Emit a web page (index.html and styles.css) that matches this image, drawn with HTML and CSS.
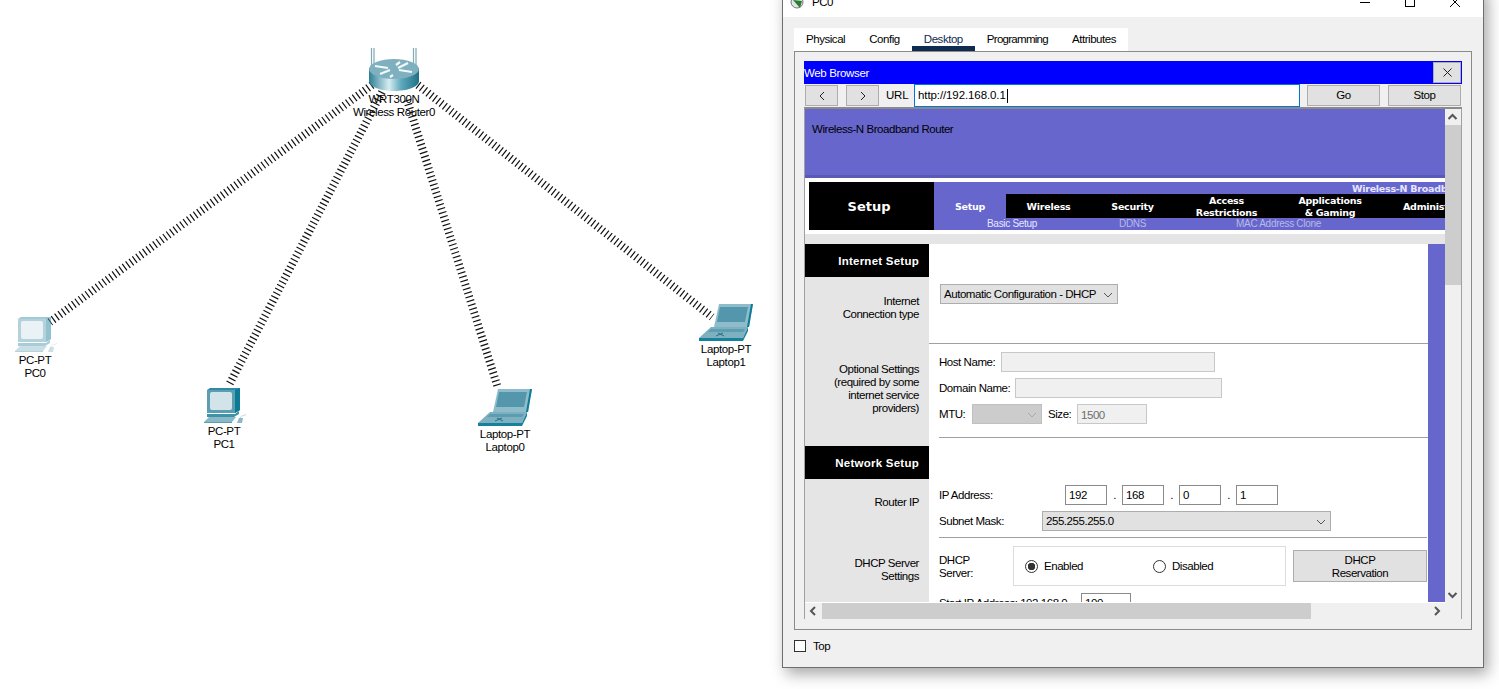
FILE: index.html
```html
<!DOCTYPE html>
<html lang="en">
<head>
<meta charset="utf-8">
<title>PC0</title>
<link rel="stylesheet" href="styles.css">
</head>
<body>
<svg class="links" width="780" height="480" viewBox="0 0 780 480" aria-hidden="true">
  <line x1="372" y1="85" x2="50" y2="322"/>
  <line x1="382" y1="92" x2="229" y2="385"/>
  <line x1="407" y1="100" x2="498" y2="388"/>
  <line x1="418" y1="85" x2="712" y2="317"/>
</svg>

<svg class="defs" width="0" height="0" aria-hidden="true">
  <symbol id="pc" viewBox="0 0 44 36">
    <polygon points="5,3 8,1 38,1 38,23 33,26 5,26" fill="#2f8ba3"/>
    <polygon points="33,3 38,1 38,23 33,26" fill="#0d7a96"/>
    <rect x="5" y="3" width="28" height="23" fill="#5b9db1"/>
    <rect x="8" y="5" width="22" height="18" rx="2" fill="#d3e3ea"/>
    <polygon points="5,27 33,27 37,24 37,27 32,30 5,30" fill="#3d93a9"/>
    <polygon points="2,35 7,30 34,30 30,35" fill="#8ab8c6"/>
    <rect x="2" y="35" width="28" height="1" fill="#5b9db1"/>
    <polygon points="35,36 37,31 41,31 40,36" fill="#8ab8c6"/>
    <path d="M38 31C40 27 43 30 44 27" fill="none" stroke="#b8d4dc" stroke-width="1"/>
  </symbol>
  <symbol id="laptop" viewBox="0 0 54 37">
    <polygon points="20,0 54,0 50,23 15,23" fill="#8fbccb"/>
    <polygon points="54,0 52,0 48,23 50,23" fill="#0d7a96"/>
    <polygon points="21,3 49,3 46,18 18,18" fill="#5497ad"/>
    <polygon points="0,34 12,23 49,23 44,34" fill="#7fb0c0"/>
    <polygon points="12,25 46,25 44,28 9,28" fill="#5b9db1"/>
    <polygon points="0,34 44,34 49,23 49,27 44,37 0,37" fill="#15819c"/>
    <path d="M17 32L24 29M19 29L25 32" stroke="#2a6f85" stroke-width="1"/>
  </symbol>
</svg>

<div class="node node-pc0">
  <svg class="pc-icon faded" width="44" height="36"><use href="#pc"/></svg>
  <span class="node-label">PC-PT<br>PC0</span>
</div>
<div class="node node-pc1">
  <svg class="pc-icon" width="44" height="36"><use href="#pc"/></svg>
  <span class="node-label">PC-PT<br>PC1</span>
</div>
<div class="node node-lap0">
  <svg class="lap-icon" width="54" height="37"><use href="#laptop"/></svg>
  <span class="node-label">Laptop-PT<br>Laptop0</span>
</div>
<div class="node node-lap1">
  <svg class="lap-icon" width="54" height="37"><use href="#laptop"/></svg>
  <span class="node-label">Laptop-PT<br>Laptop1</span>
</div>
<div class="node node-router">
  <svg class="router-icon" width="54" height="44" viewBox="0 0 54 44">
    <defs>
      <linearGradient id="cyl" x1="0" x2="1" y1="0" y2="0">
        <stop offset="0" stop-color="#2c7f95"/>
        <stop offset=".4" stop-color="#d5edf1"/>
        <stop offset=".65" stop-color="#5da7bb"/>
        <stop offset="1" stop-color="#1f7187"/>
      </linearGradient>
    </defs>
    <path d="M4.500 0V20M7 0V20M46.500 0V20M49 0V20" stroke="#7fa9b4" stroke-width="1.200"/>
    <path d="M2 20V33C2 39 14 43 27 43S52 39 52 33V20Z" fill="url(#cyl)"/>
    <ellipse cx="27" cy="21" rx="25" ry="10" fill="#7fb0bf"/>
    <path d="M8 18L21 20M32 22L45 24M13 26L23 22M31 20L41 15M26 27L23 29M29 17L33 14" stroke="#f2f9fa" stroke-width="2.200" fill="none"/>
  </svg>
  <span class="node-label router-label">WRT300N<br>Wireless Router0</span>
</div>

<section class="window">
  <header class="titlebar">
    <svg class="app-icon" width="17" height="17" viewBox="0 0 17 17">
      <circle cx="7" cy="8" r="6" fill="#dfe7e6" stroke="#777" stroke-width="1"/>
      <path d="M3 6L10 14L12 7" fill="#2a7d32"/>
    </svg>
    <span class="title">PC0</span>
    <span class="win-controls">
      <svg width="12" height="12" viewBox="0 0 12 12"><path d="M1 6.500H11" stroke="#000"/></svg>
      <svg width="12" height="12" viewBox="0 0 12 12"><rect x="1.500" y="1.500" width="9" height="9" fill="none" stroke="#000"/></svg>
      <svg width="12" height="12" viewBox="0 0 12 12"><path d="M1 1L11 11M11 1L1 11" stroke="#000"/></svg>
    </span>
  </header>

  <div class="win-body">
    <nav class="tabs">
      <span class="tab">Physical</span>
      <span class="tab">Config</span>
      <span class="tab tab-active">Desktop</span>
      <span class="tab tab-prog">Programming</span>
      <span class="tab">Attributes</span>
    </nav>

    <div class="panel">
      <div class="bb-title">
        <span>Web Browser</span>
        <button class="bb-close" type="button">
          <svg width="11" height="11" viewBox="0 0 11 11"><path d="M1.500 1.500L9.500 9.500M9.500 1.500L1.500 9.500" stroke="#222"/></svg>
        </button>
      </div>
      <div class="bb-toolbar">
        <button class="btn nav-btn" type="button">
          <svg width="8" height="10" viewBox="0 0 8 10"><path d="M6 1L2 5L6 9" fill="none" stroke="#222"/></svg>
        </button>
        <button class="btn nav-btn" type="button">
          <svg width="8" height="10" viewBox="0 0 8 10"><path d="M2 1L6 5L2 9" fill="none" stroke="#222"/></svg>
        </button>
        <span class="url-label">URL</span>
        <div class="url-input">http://192.168.0.1<i class="caret"></i></div>
        <button class="btn action-btn" type="button">Go</button>
        <button class="btn action-btn" type="button">Stop</button>
      </div>

      <div class="viewer">
        <div class="viewport">
          <div class="page">
            <div class="banner">Wireless-N Broadband Router</div>
            <div class="hero">
              <div class="hero-name">Setup</div>
              <div class="hero-nav">
                <div class="product">Wireless-N Broadband Router</div>
                <div class="menu">
                  <span class="menu-item menu-on">Setup</span>
                  <span class="menu-item menu-wireless">Wireless</span>
                  <span class="menu-item menu-security">Security</span>
                  <span class="menu-item menu-access">Access<br>Restrictions</span>
                  <span class="menu-item menu-apps">Applications<br>&amp; Gaming</span>
                  <span class="menu-item menu-admin">Administration</span>
                </div>
                <div class="submenu">
                  <span class="sub sub-basic">Basic Setup</span>
                  <span class="sub sub-ddns">DDNS</span>
                  <span class="sub sub-mac">MAC Address Clone</span>
                </div>
              </div>
            </div>
            <div class="divider-band"></div>

            <div class="main">
              <div class="sections">
                <div class="row row-head">
                  <div class="side side-head">Internet Setup</div>
                  <div class="content"></div>
                </div>
                <div class="row row-conn">
                  <div class="side"><p class="side-text st-conn">Internet<br>Connection type</p></div>
                  <div class="content">
                    <div class="select sel-conn">Automatic Configuration - DHCP<svg class="chev" width="10" height="6" viewBox="0 0 10 6"><path d="M1 1L5 5L9 1" fill="none" stroke="#555"/></svg></div>
                  </div>
                </div>
                <div class="row row-opt">
                  <div class="side"><p class="side-text st-opt">Optional Settings<br>(required by some<br>internet service<br>providers)</p></div>
                  <div class="content">
                    <div class="field f-host"><label class="lbl lbl-host">Host Name:</label><div class="box disabled b-host"></div></div>
                    <div class="field f-domain"><label class="lbl lbl-domain">Domain Name:</label><div class="box disabled b-domain"></div></div>
                    <div class="field f-mtu">
                      <label class="lbl lbl-mtu">MTU:</label>
                      <div class="select sel-mtu"><svg class="chev" width="10" height="6" viewBox="0 0 10 6"><path d="M1 1L5 5L9 1" fill="none" stroke="#a8a8a8"/></svg></div>
                      <label class="lbl lbl-size">Size:</label>
                      <div class="box disabled b-size">1500</div>
                    </div>
                    <hr class="rule rule-mtu">
                  </div>
                </div>
                <div class="row row-head">
                  <div class="side side-head">Network Setup</div>
                  <div class="content"></div>
                </div>
                <div class="row row-ip">
                  <div class="side"><p class="side-text st-ip">Router IP</p></div>
                  <div class="content">
                    <div class="field f-ip">
                      <label class="lbl lbl-ip">IP Address:</label>
                      <div class="box octet">192</div><span class="dot">.</span>
                      <div class="box octet">168</div><span class="dot">.</span>
                      <div class="box octet">0</div><span class="dot">.</span>
                      <div class="box octet">1</div>
                    </div>
                    <div class="field f-mask">
                      <label class="lbl lbl-mask">Subnet Mask:</label>
                      <div class="select sel-mask">255.255.255.0<svg class="chev" width="10" height="6" viewBox="0 0 10 6"><path d="M1 1L5 5L9 1" fill="none" stroke="#555"/></svg></div>
                    </div>
                    <hr class="rule rule-ip">
                  </div>
                </div>
                <div class="row row-dhcp">
                  <div class="side"><p class="side-text st-dhcp">DHCP Server<br>Settings</p></div>
                  <div class="content">
                    <div class="field f-dhcp">
                      <label class="lbl lbl-dhcp">DHCP<br>Server:</label>
                      <div class="radio-box">
                        <span class="radio-opt r-en"><i class="radio radio-on"></i>Enabled</span>
                        <span class="radio-opt"><i class="radio"></i>Disabled</span>
                      </div>
                      <button class="btn res-btn" type="button">DHCP<br>Reservation</button>
                    </div>
                    <div class="field f-start">
                      <label class="lbl lbl-start">Start IP Address: 192.168.0.</label>
                      <div class="box b-start">100</div>
                    </div>
                  </div>
                </div>
              </div>
              <div class="strip"></div>
            </div>
          </div>
        </div>
        <div class="vbar">
          <svg class="arrow" width="16" height="16" viewBox="0 0 16 16"><path d="M3.500 10L7.500 6L11.500 10" fill="none" stroke="#555" stroke-width="2"/></svg>
          <div class="vtrack"><div class="vthumb"></div></div>
          <svg class="arrow" width="16" height="16" viewBox="0 0 16 16"><path d="M3.500 6L7.500 10L11.500 6" fill="none" stroke="#555" stroke-width="2"/></svg>
        </div>
        <div class="hbar">
          <svg class="arrow" width="17" height="16" viewBox="0 0 17 16"><path d="M10 4L6 8L10 12" fill="none" stroke="#555" stroke-width="2"/></svg>
          <div class="htrack"><div class="hthumb"></div></div>
          <svg class="arrow" width="17" height="16" viewBox="0 0 17 16"><path d="M7 4L11 8L7 12" fill="none" stroke="#555" stroke-width="2"/></svg>
        </div>
        <div class="corner"></div>
      </div>
    </div>

    <div class="footer">
      <i class="check"></i><span>Top</span>
    </div>
  </div>
</section>
</body>
</html>
```

FILE: styles.css
```css
* { box-sizing: border-box; }
html, body { margin: 0; padding: 0; }
body {
  width: 1499px;
  height: 689px;
  position: relative;
  overflow: hidden;
  background: #fff;
  font-family: "Liberation Sans", Arial, sans-serif;
  font-size: 11.5px;
  line-height: 13px;
  letter-spacing: -0.45px;
  color: #000;
}
p { margin: 0; }
hr { margin: 0; border: 0; }
button { font: inherit; letter-spacing: inherit; color: inherit; padding: 0; }
i { display: block; font-style: normal; }

/* network canvas */
.links { position: absolute; left: 0; top: 0; }
.links line { stroke: #111; stroke-width: 8; stroke-dasharray: 1.200 3; }
.defs { position: absolute; }
.node { position: absolute; display: flex; flex-direction: column; align-items: center; width: 100px; }
.node svg { display: block; }
.node-label { text-align: center; white-space: nowrap; letter-spacing: -0.38px; }
.node-pc0 { left: -15px; top: 316px; }
.node-pc1 { left: 174px; top: 387px; }
.node-lap0 { left: 455px; top: 389px; }
.node-lap1 { left: 676px; top: 304px; }
.node-router { left: 344px; top: 48px; }
.faded { opacity: .45; }
.pc-icon + .node-label { margin-top: 2px; }
.lap-icon + .node-label { margin-top: 2px; }
.router-icon + .node-label { margin-top: 1px; }

/* window */
.window {
  position: absolute;
  left: 782px;
  top: -14px;
  width: 702px;
  height: 682px;
  background: #f0f0f0;
  border: 1px solid #6e6e6e;
  box-shadow: 4px 6px 14px rgba(0, 0, 0, .35);
  display: flex;
  flex-direction: column;
}
.titlebar {
  height: 30px;
  flex: none;
  background: #fff;
  display: flex;
  align-items: center;
  padding-left: 7px;
}
.app-icon { margin-right: 5px; }
.win-controls { margin-left: auto; display: flex; gap: 33px; padding-right: 22px; }
.win-controls svg { display: block; }
.win-body { flex: 1; padding: 11px 11px 0; display: flex; flex-direction: column; }

.tabs { height: 23px; width: 334px; background: #fff; display: flex; flex: none; padding-left: 0; }
.tab { padding: 5px 12px 0; white-space: nowrap; height: 23px; }
.tab-active { color: #0f2b50; border-bottom: 5px solid #0f2b50; margin: 0; }
.tab-prog { letter-spacing: -0.72px; }

.panel {
  height: 579px;
  width: 678px;
  flex: none;
  border: 1px solid #8a8a8a;
  padding: 9px 9px 10px;
  display: flex;
  flex-direction: column;
}
.bb-title {
  height: 23px;
  flex: none;
  background: #00f;
  color: #fff;
  display: flex;
  align-items: center;
  justify-content: space-between;
  padding-right: 1px;
}
.bb-title > span { padding-top: 2px; letter-spacing: -0.35px; }
.bb-close {
  width: 28px;
  height: 21px;
  background: #e1e1e1;
  border: 1px solid #adadad;
  display: flex;
  align-items: center;
  justify-content: center;
}
.bb-close svg { display: block; }
.bb-toolbar { height: 23px; flex: none; display: flex; align-items: center; padding-left: 1px; }
.btn { background: #e1e1e1; border: 1px solid #adadad; }
.nav-btn { width: 33px; height: 21px; margin-right: 8px; display: flex; align-items: center; justify-content: center; }
.url-label { margin-left: -1px; width: 28px; padding-left: 0; letter-spacing: -0.2px; }
.url-input {
  width: 386px;
  height: 23px;
  background: #fff;
  border: 1px solid #0078d7;
  padding-left: 3px;
  line-height: 21px;
  letter-spacing: -0.1px;
  display: flex;
  align-items: center;
  margin-right: 7px;
}
.caret { width: 1px; height: 14px; background: #000; margin-left: 1px; }
.action-btn { width: 73px; height: 21px; margin-right: 8px; }
.action-btn:last-child { margin-right: 0; }

.viewer {
  flex: 1;
  border: 1px solid #a0a0a0;
  border-top: 2px solid #8a8a8a;
  display: grid;
  grid-template-columns: 640px 16px;
  grid-template-rows: 494px 16px;
  background: #f0f0f0;
  min-height: 0;
}
.viewport { overflow: hidden; background: #fff; }
.page { width: 640px; }
.banner {
  height: 69px;
  background: #6666cc;
  border-bottom: 3px solid #5a5ab4;
  padding: 14px 0 0 7px;
}
.hero { margin: 4px 0 4px 4px; height: 48px; display: flex; border-top: 0; }
.hero-name {
  width: 125px;
  background: #000;
  color: #fff;
  font: bold 13px/50px "DejaVu Sans", sans-serif;
  letter-spacing: 0;
  text-align: center;
  padding-right: 5px;
}
.hero-nav { flex: 1; min-width: 0; display: flex; flex-direction: column; background: #6666cc; overflow: hidden; }
.product {
  height: 12px;
  padding-left: 418px;
  white-space: nowrap;
  color: #e6e6ff;
  font: bold 9.500px/13px "DejaVu Sans", sans-serif;
  letter-spacing: -0.25px;
}
.menu {
  height: 24px;
  display: flex;
  background: #000;
  color: #fff;
  font: bold 9.500px/12px "DejaVu Sans", sans-serif;
  letter-spacing: -0.25px;
}
.menu-item { flex: none; height: 24px; display: flex; align-items: center; justify-content: center; text-align: center; white-space: nowrap; padding-top: 1px; }
.menu-on { width: 72px; background: #6666cc; }
.menu-wireless { width: 85px; }
.menu-security { width: 83px; }
.menu-access { width: 105px; }
.menu-apps { width: 102px; }
.menu-admin { width: 100px; justify-content: flex-start; padding-left: 22px; }
.submenu { height: 12px; display: flex; color: #b9b9e6; font-size: 10px; line-height: 12px; letter-spacing: -0.3px; white-space: nowrap; }
.sub-basic { margin-left: 53px; color: #e6e6ff; width: 132px; }
.sub-ddns { width: 117px; }
.divider-band { height: 10px; background: #e5e5e5; }

.main { display: flex; height: 358px; overflow: hidden; }
.sections { width: 623px; }
.strip { width: 17px; background: #6666cc; }
.row { display: grid; grid-template-columns: 124px 499px; }
.row-head { height: 33px; }
.row-conn { height: 67px; }
.row-opt { height: 102px; }
.row-ip { height: 59px; }
.row-dhcp { height: 100px; }
.side { background: #e5e5e5; }
.side-head {
  background: #000;
  color: #fff;
  text-align: right;
  padding-right: 10px;
  font: bold 11.500px/35px "Liberation Sans", sans-serif;
  letter-spacing: .25px;
}
.side-text { text-align: right; padding-right: 10px; }
.st-conn { padding-top: 18px; }
.st-opt { padding-top: 19px; }
.st-ip { padding-top: 17px; }
.st-dhcp { padding-top: 19px; }
.content { background: #fff; min-width: 0; }
.row-conn .content { border-bottom: 1px solid #a0a0a0; padding: 7px 0 0 11px; }
.row-opt .content { padding: 8px 0 0 10px; }
.row-ip .content { padding: 6px 0 0 10px; }
.row-dhcp .content { padding: 8px 0 0 10px; }

.select {
  height: 20px;
  background: #e1e1e1;
  border: 1px solid #adadad;
  display: flex;
  align-items: center;
  justify-content: space-between;
  padding: 1px 4px 0 3px;
  white-space: nowrap;
}
.chev { display: block; flex: none; }
.field { display: flex; align-items: center; height: 20px; }
.sel-conn { width: 178px; }
.f-domain, .f-mtu { margin-top: 6px; }
.lbl { display: block; white-space: nowrap; }
.box { height: 20px; border: 1px solid #8a8a8a; padding-left: 3px; line-height: 18px; background: #fff; }
.box.disabled { background: #f0f0f0; border-color: #c8c8c8; color: #6d6d6d; line-height: 20px; }
.lbl-host { width: 62px; padding-top: 1px; }
.b-host { width: 214px; }
.lbl-domain { width: 76px; padding-top: 1px; }
.b-domain { width: 207px; }
.lbl-mtu { width: 33px; padding-top: 1px; }
.sel-mtu { width: 70px; background: #cccccc; border-color: #c0c0c0; justify-content: flex-end; }
.lbl-size { margin-left: 6px; width: 29px; padding-top: 1px; }
.b-size { width: 70px; }
.rule { height: 1px; background: #a0a0a0; }
.rule-mtu { margin-top: 13px; margin-right: 0; }
.lbl-ip { width: 126px; }
.octet { width: 42px; }
.dot { width: 15px; text-align: center; }
.f-mask { margin-top: 6px; }
.lbl-mask { width: 103px; }
.sel-mask { width: 289px; padding-right: 4px; }
.rule-ip { margin-top: 6px; margin-right: 1px; }
.f-dhcp { height: 40px; }
.lbl-dhcp { width: 74px; padding-top: 1px; }
.radio-box {
  width: 273px;
  height: 40px;
  border: 1px solid #dcdcdc;
  display: flex;
  align-items: center;
  padding-left: 11px;
  flex: none;
}
.radio-opt { display: flex; align-items: center; gap: 6px; line-height: 15px; }
.r-en { width: 128px; }
.radio { width: 13px; height: 13px; border-radius: 50%; border: 1px solid #333; background: #fff; flex: none; }
.radio-on { background: radial-gradient(circle, #333 0 3.500px, #fff 4px); }
.res-btn { width: 134px; height: 32px; margin-left: 7px; padding-top: 1px; }
.f-start { margin-top: 7px; }
.lbl-start { width: 142px; }
.b-start { width: 50px; }

.vbar { grid-column: 2; grid-row: 1; display: flex; flex-direction: column; background: #f0f0f0; }
.vbar .arrow, .hbar .arrow { display: block; flex: none; }
.vtrack { flex: 1; }
.vthumb { height: 160px; background: #cdcdcd; }
.hbar { grid-column: 1; grid-row: 2; display: flex; background: #f0f0f0; }
.htrack { flex: 1; }
.hthumb { width: 489px; height: 16px; background: #cdcdcd; }
.corner { background: #f0f0f0; }

.footer { display: flex; align-items: center; gap: 7px; margin-top: 9px; height: 14px; }
.check { width: 12px; height: 12px; border: 1px solid #333; background: #fff; }
```
